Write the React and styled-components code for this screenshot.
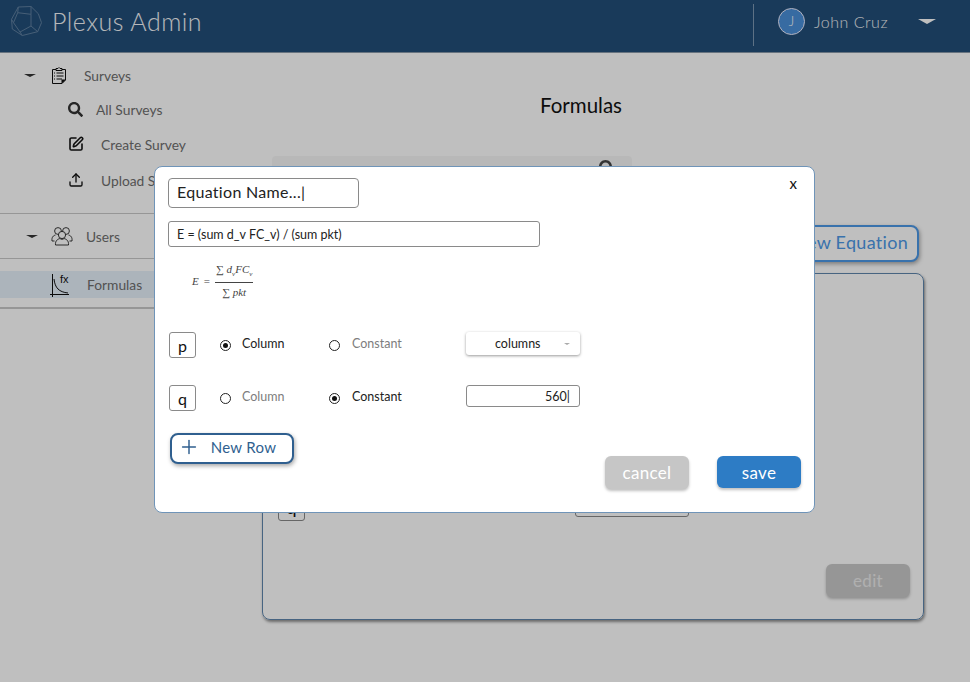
import React from "react";
import styled, { createGlobalStyle } from "styled-components";
import { FaSearch } from "react-icons/fa";
import { SquarePen, Upload, Plus } from "lucide-react";

const GlobalStyle = createGlobalStyle`
  html, body { margin: 0; padding: 0; height: 100%; background: #fff; }
  body { font-family: Lato, "Noto Sans", sans-serif; overflow: hidden; }
  * { box-sizing: border-box; }
`;

const Page = styled.div`
  width: 970px;
  height: 682px;
  display: flex;
  flex-direction: column;
  overflow: hidden;
`;

const Header = styled.header`
  height: 53px;
  flex: none;
  display: flex;
  align-items: center;
  background: #224e79;
  border-bottom: 1px solid #8a9aaa;
  padding: 0 34px 10px 11px;
  color: #fff;
`;

const Brand = styled.div`
  display: flex;
  align-items: center;
  gap: 10px;
  font-size: 25px;
  font-weight: 300;
  letter-spacing: 0.5px;
  color: #f4f6f8;
  flex: 1;
`;

const HeaderDivider = styled.div`
  width: 1px;
  height: 42px;
  margin-top: 8px;
  background: #7c97b2;
  margin-right: 24px;
`;

const Avatar = styled.div`
  width: 27px;
  height: 27px;
  border-radius: 50%;
  background: #4a8fd8;
  border: 1px solid #eef;
  display: flex;
  align-items: center;
  justify-content: center;
  font-size: 13px;
  font-weight: 300;
  margin-right: 9px;
`;

const UserName = styled.span`
  font-size: 16px;
  letter-spacing: 0.5px;
  font-weight: 300;
  color: #f0f2f5;
  margin-right: 30px;
`;

const Caret = styled.span`
  width: 0;
  height: 0;
  border-left: ${(p) => p.$size}px solid transparent;
  border-right: ${(p) => p.$size}px solid transparent;
  border-top: ${(p) => Math.round(p.$size * 0.5)}px solid ${(p) => p.$color};
  flex: none;
`;

const Body = styled.div`
  flex: 1;
  display: flex;
  min-height: 0;
`;

const Sidebar = styled.nav`
  width: 230px;
  flex: none;
  padding-top: 5px;
  font-size: 13.8px;
`;

const NavRow = styled.div`
  display: flex;
  align-items: center;
  height: ${(p) => p.$height || 35}px;
  padding-left: ${(p) => p.$indent}px;
  margin-top: ${(p) => p.$top || 0}px;
  color: #6e6e6e;
  background: ${(p) => (p.$active ? "#e6f0fa" : "transparent")};
`;

const NavIcon = styled.span`
  display: flex;
  width: ${(p) => p.$width}px;
  margin-left: ${(p) => p.$left || 0}px;
  flex: none;
  color: ${(p) => p.$color || "#111"};
`;

const NavDivider = styled.hr`
  margin: ${(p) => p.$margin};
  border: 0;
  border-top: ${(p) => p.$weight || 1}px solid #c8c8c8;
`;

const Main = styled.main`
  flex: 1;
  display: flex;
  flex-direction: column;
  padding-left: 32px;
`;

const PageTitle = styled.h1`
  width: 638px;
  margin: 40px 0 0;
  text-align: center;
  font-size: 20.5px;
  font-weight: 400;
  color: #111;
  line-height: 24px;
`;

const SearchBar = styled.div`
  width: 360px;
  height: 34px;
  margin: 39px 0 0 10px;
  background: #f6f6f6;
  border-radius: 4px;
  display: flex;
  justify-content: flex-end;
  padding: 4px 17px;
  color: #444;
  font-size: 16px;
`;

const Toolbar = styled.div`
  display: flex;
  justify-content: flex-end;
  width: 657px;
  margin-top: 35px;
`;

const OutlineButton = styled.button`
  height: ${(p) => p.$height}px;
  width: ${(p) => p.$width}px;
  border: 2px solid ${(p) => p.$color};
  border-radius: 8px;
  background: #fff;
  color: ${(p) => p.$color};
  font-family: Lato, sans-serif;
  font-size: ${(p) => p.$fontSize}px;
  letter-spacing: 0.3px;
  display: flex;
  align-items: center;
  justify-content: ${(p) => p.$justify || "center"};
  gap: 11px;
  box-shadow: 1px 2px 4px rgba(0, 0, 0, 0.35);
  padding: 0 ${(p) => p.$padRight || 0}px 3px 0;
`;

const Panel = styled.section`
  width: 662px;
  height: 347px;
  margin-top: 11px;
  border: 1px solid #5f86ad;
  border-radius: 8px;
  box-shadow: 1px 2px 3px rgba(0, 0, 0, 0.45);
  padding: 219px 13px 22px 15px;
  display: flex;
  flex-direction: column;
`;

const PanelRow = styled.div`
  display: flex;
  justify-content: space-between;
  align-items: flex-start;
  padding-right: 221px;
`;

const ValueBox = styled.div`
  width: ${(p) => p.$width}px;
  height: ${(p) => p.$height}px;
  border: 1px solid #888;
  border-radius: 3px;
  background: #fff;
  display: flex;
  align-items: center;
  justify-content: center;
  font-size: 18px;
  color: #111;
`;

const PanelFooter = styled.div`
  margin-top: auto;
  display: flex;
  justify-content: flex-end;
`;

const SolidButton = styled.button`
  width: 84px;
  height: ${(p) => p.$height || 33}px;
  border: 0;
  border-radius: 6px;
  background: ${(p) => p.$bg};
  color: ${(p) => p.$color || "#fff"};
  font: 400 17px Lato, sans-serif;
  letter-spacing: 0.3px;
  box-shadow: 0 2px 3px rgba(0, 0, 0, 0.25);
  padding: 0;
`;

const Backdrop = styled.div`
  position: fixed;
  inset: 0;
  background: rgba(0, 0, 0, 0.25);
  padding: 166px 0 0 154px;
`;

const Modal = styled.div`
  position: relative;
  width: 661px;
  height: 347px;
  background: #fff;
  border: 1px solid #6f94b8;
  border-radius: 8px;
  padding: 11px 13px 0 13px;
  color: #111;
`;

const CloseMark = styled.span`
  position: absolute;
  top: 7px;
  right: 17px;
  font-size: 15px;
  line-height: 18px;
  color: #111;
`;

const NameField = styled.div`
  width: 191px;
  height: 30px;
  border: 1px solid #8a8a8a;
  border-radius: 4px;
  display: flex;
  align-items: center;
  padding: 0 0 3px 8px;
  font-size: 16px;
  letter-spacing: 0.3px;
  color: #222;
`;

const EquationField = styled.div`
  width: 372px;
  height: 26px;
  margin-top: 13px;
  border: 1px solid #8a8a8a;
  border-radius: 3px;
  display: flex;
  align-items: center;
  padding-left: 8px;
  font-size: 12.5px;
  color: #222;
`;

const Formula = styled.div`
  display: flex;
  align-items: center;
  gap: 5px;
  margin: 18px 0 0 24px;
  height: 32px;
  font-family: "Liberation Serif", serif;
  font-size: 11px;
  color: #444;
`;

const Fraction = styled.span`
  display: inline-flex;
  flex-direction: column;
  align-items: center;
`;

const Numerator = styled.span`
  padding: 0 1px 2px;
  border-bottom: 1px solid #444;
  font-style: italic;
  line-height: 12px;
`;

const Denominator = styled.span`
  font-style: italic;
  line-height: 14px;
  padding-top: 2px;
`;

const Subscript = styled.sub`
  font-size: 7px;
`;

const VarRow = styled.div`
  display: grid;
  grid-template-columns: 51px 22px 87px 23px 114px 114px;
  align-items: center;
  margin-top: ${(p) => p.$top}px;
  margin-left: 1px;
  height: 26px;
`;

const VarBadge = styled.div`
  width: 27px;
  height: 26px;
  border: 1px solid #8a8a8a;
  border-radius: 3px;
  display: flex;
  align-items: center;
  justify-content: center;
  font-size: 16px;
`;

const Radio = styled.span`
  width: 11px;
  height: 11px;
  border: 1px solid #222;
  border-radius: 50%;
  display: flex;
  align-items: center;
  justify-content: center;
  &::after {
    content: "";
    width: 5px;
    height: 5px;
    border-radius: 50%;
    background: ${(p) => (p.$checked ? "#111" : "transparent")};
  }
`;

const RadioLabel = styled.span`
  font-size: 12.5px;
  padding-bottom: 3px;
  color: ${(p) => (p.$checked ? "#222" : "#7d7d7d")};
`;

const SelectBox = styled.div`
  height: 23px;
  border-radius: 3px;
  background: #fff;
  box-shadow: 0 1px 3px rgba(0, 0, 0, 0.4);
  display: flex;
  align-items: center;
  justify-content: space-between;
  padding: 0 10px 0 29px;
  font-size: 12.5px;
  color: #222;
  align-self: start;
`;

const ValueField = styled.div`
  height: 22px;
  border: 1px solid #8a8a8a;
  border-radius: 3px;
  display: flex;
  align-items: center;
  justify-content: flex-end;
  padding-right: 9px;
  font-size: 12.5px;
  color: #222;
  align-self: start;
`;

const ModalFooter = styled.div`
  display: flex;
  justify-content: space-between;
  align-items: flex-start;
  margin: 22px 0 0 2px;
`;

const FooterActions = styled.div`
  display: flex;
  gap: 28px;
  margin-top: 23px;
`;

const Dodecahedron = () => (
  <svg width="31" height="31" viewBox="0 0 31 31" fill="none" stroke="#5f7f9f" strokeWidth="1">
    <path d="M7.3 1 L20 0.5 L27.3 7.7 L30.5 16.7 L26.7 25.7 L11.3 29.5 L1.3 23 L0.5 13.3 Z" />
    <path d="M6.7 6.7 L20 8.3 L20 20 L9 26 L2.5 16.7 Z" />
    <path d="M20 0.5 L20 8.3 M20 20 L26.7 25.7 M7.3 1 L6.7 6.7 M9 26 L11.3 29.5 M2.5 16.7 L0.5 13.3" />
  </svg>
);

const ClipboardIcon = () => (
  <svg width="16" height="18" viewBox="0 0 16 18" fill="none" stroke="#111" strokeWidth="1">
    <path d="M5 2.5 H1.5 V16.5 H11 L14.5 13 V2.5 H11" />
    <path d="M5 3.5 V1.5 H7 L8 0.5 L9 1.5 H11 V3.5 Z" />
    <path d="M3 6 H4 M3 9 H4 M3 12 H4 M5.5 6 H12.5 M5.5 9 H12.5 M5.5 12 H11" />
    <path d="M10.5 17 V12.5 H15 Z" fill="#111" stroke="none" />
  </svg>
);

const PeopleIcon = () => (
  <svg width="22" height="20" viewBox="0 0 22 20" fill="none" stroke="#222" strokeWidth="0.9">
    <circle cx="7" cy="5" r="3.4" />
    <circle cx="15" cy="5" r="3.4" />
    <path d="M3.5 15 H1 C0.5 11 2.5 9.5 4.5 9" />
    <path d="M18.5 15 H21 C21.5 11 19.5 9.5 17.5 9" />
    <circle cx="11" cy="9" r="3.6" fill="#fff" />
    <path d="M4.5 19 C4 14.5 7 13 9 12.5 C10 13.5 12 13.5 13 12.5 C15 13 18 14.5 17.5 19 Z" fill="#fff" />
  </svg>
);

const FormulaIcon = () => (
  <svg width="26" height="27" viewBox="0 0 26 27" fill="none" stroke="#111" strokeWidth="1">
    <path d="M2.5 3 V26 M0 23.5 H19" />
    <path d="M4 8 C5 17 9 21 18 22" />
    <text x="10" y="12" fontSize="11" fill="#111" stroke="none" fontFamily="Liberation Sans, sans-serif">fx</text>
  </svg>
);

export default function App() {
  return (
    <Page>
      <GlobalStyle />
      <Header>
        <Brand>
          <Dodecahedron />
          Plexus Admin
        </Brand>
        <HeaderDivider />
        <Avatar>J</Avatar>
        <UserName>John Cruz</UserName>
        <Caret $size={9} $color="#fff" />
      </Header>
      <Body>
        <Sidebar>
          <NavRow $indent={24} $height={35}>
            <Caret $size={6} $color="#333" />
            <NavIcon $width={33} $left={15}><ClipboardIcon /></NavIcon>
            Surveys
          </NavRow>
          <NavRow $indent={68} $height={33}>
            <NavIcon $width={28} $color="#333"><FaSearch size={15} /></NavIcon>
            All Surveys
          </NavRow>
          <NavRow $indent={68} $height={36}>
            <NavIcon $width={33}><SquarePen size={16} strokeWidth={2.4} /></NavIcon>
            Create Survey
          </NavRow>
          <NavRow $indent={68} $height={36}>
            <NavIcon $width={33}><Upload size={16} strokeWidth={2} /></NavIcon>
            Upload Survey
          </NavRow>
          <NavDivider $margin="15px 0 0" />
          <NavRow $indent={26} $height={44}>
            <Caret $size={6} $color="#333" />
            <NavIcon $width={35} $left={13}><PeopleIcon /></NavIcon>
            Users
          </NavRow>
          <NavDivider $margin="0" />
          <NavRow $indent={50} $height={27} $active $top={12}>
            <NavIcon $width={37}><FormulaIcon /></NavIcon>
            Formulas
          </NavRow>
          <NavDivider $margin="9px 0 0" $weight={2} />
        </Sidebar>
        <Main>
          <PageTitle>Formulas</PageTitle>
          <SearchBar><FaSearch /></SearchBar>
          <Toolbar>
            <OutlineButton $width={190} $height={37} $color="#4d98e6" $fontSize={18} $justify="flex-end" $padRight={9}>New Equation</OutlineButton>
          </Toolbar>
          <Panel>
            <PanelRow>
              <ValueBox $width={27} $height={28}>q</ValueBox>
              <ValueBox $width={114} $height={24} />
            </PanelRow>
            <PanelFooter>
              <SolidButton $bg="#c9c9c9" $color="#ebebeb">edit</SolidButton>
            </PanelFooter>
          </Panel>
        </Main>
      </Body>
      <Backdrop>
        <Modal>
          <CloseMark>x</CloseMark>
          <NameField>Equation Name...|</NameField>
          <EquationField>E = (sum d_v FC_v) / (sum pkt)</EquationField>
          <Formula>
            <i>E</i> =
            <Fraction>
              <Numerator>∑ d<Subscript>v</Subscript>FC<Subscript>v</Subscript></Numerator>
              <Denominator>∑ pkt</Denominator>
            </Fraction>
          </Formula>
          <VarRow $top={35}>
            <VarBadge>p</VarBadge>
            <Radio $checked />
            <RadioLabel $checked>Column</RadioLabel>
            <Radio />
            <RadioLabel>Constant</RadioLabel>
            <SelectBox>columns <Caret $size={3} $color="#aaa" /></SelectBox>
          </VarRow>
          <VarRow $top={27}>
            <VarBadge>q</VarBadge>
            <Radio />
            <RadioLabel>Column</RadioLabel>
            <Radio $checked />
            <RadioLabel $checked>Constant</RadioLabel>
            <ValueField>560|</ValueField>
          </VarRow>
          <ModalFooter>
            <OutlineButton $width={124} $height={31} $color="#2f5f8f" $fontSize={15} $padRight={10}>
              <Plus size={22} strokeWidth={1.6} /> New Row
            </OutlineButton>
            <FooterActions>
              <SolidButton $bg="#c6c6c6">cancel</SolidButton>
              <SolidButton $bg="#2d7cc5" $height={32}>save</SolidButton>
            </FooterActions>
          </ModalFooter>
        </Modal>
      </Backdrop>
    </Page>
  );
}
